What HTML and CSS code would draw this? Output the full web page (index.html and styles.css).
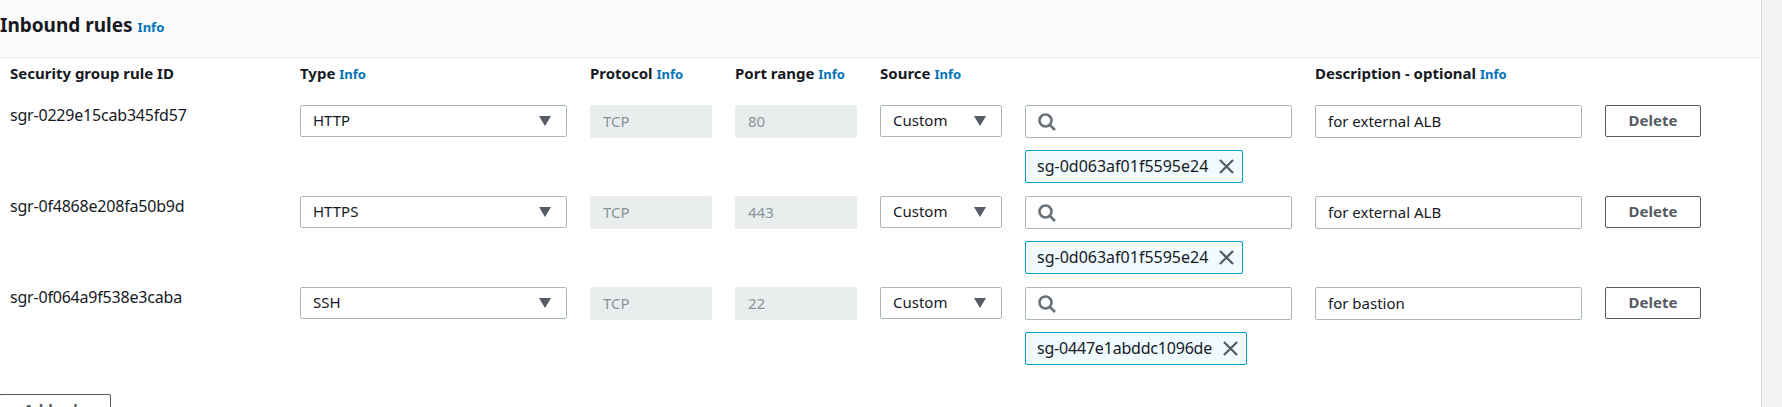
FILE: index.html
```html
<!DOCTYPE html>
<html lang="en">
<head>
<meta charset="utf-8">
<title>Inbound rules</title>
<link rel="stylesheet" href="styles.css">
</head>
<body>
<svg class="sprite" width="0" height="0" aria-hidden="true">
  <symbol id="i-search" viewBox="0 0 18 18"><circle cx="7.5" cy="7.5" r="6" fill="none" stroke="currentColor" stroke-width="2.6"/><path d="M11.8 11.8 17 17" fill="none" stroke="currentColor" stroke-width="2.6"/></symbol>
  <symbol id="i-x" viewBox="0 0 16 16"><path d="M1 1 15 15M15 1 1 15" fill="none" stroke="currentColor" stroke-width="2.4"/></symbol>
</svg>
<main class="panel">
  <header class="panel-head"><h2 class="title">Inbound rules <a class="info">Info</a></h2></header>
  <div class="rules">
    <div class="row labels">
      <div class="label">Security group rule ID</div>
      <div class="label">Type <a class="info">Info</a></div>
      <div class="label">Protocol <a class="info">Info</a></div>
      <div class="label">Port range <a class="info">Info</a></div>
      <div class="label">Source <a class="info">Info</a></div>
      <div></div>
      <div class="label">Description - optional <a class="info">Info</a></div>
    </div>

    <div class="row rule">
      <div class="rule-id">sgr-0229e15cab345fd57</div>
      <div class="field select"><span>HTTP</span><i class="caret"></i></div>
      <div class="field disabled">TCP</div>
      <div class="field disabled">80</div>
      <div class="field select"><span>Custom</span><i class="caret"></i></div>
      <div class="source">
        <div class="field search"><svg class="search-icon"><use href="#i-search"/></svg></div>
        <div class="chip">sg-0d063af01f5595e24<svg class="chip-x"><use href="#i-x"/></svg></div>
      </div>
      <div class="field">for external ALB</div>
      <div class="btn delete">Delete</div>
    </div>

    <div class="row rule">
      <div class="rule-id">sgr-0f4868e208fa50b9d</div>
      <div class="field select"><span>HTTPS</span><i class="caret"></i></div>
      <div class="field disabled">TCP</div>
      <div class="field disabled">443</div>
      <div class="field select"><span>Custom</span><i class="caret"></i></div>
      <div class="source">
        <div class="field search"><svg class="search-icon"><use href="#i-search"/></svg></div>
        <div class="chip">sg-0d063af01f5595e24<svg class="chip-x"><use href="#i-x"/></svg></div>
      </div>
      <div class="field">for external ALB</div>
      <div class="btn delete">Delete</div>
    </div>

    <div class="row rule">
      <div class="rule-id">sgr-0f064a9f538e3caba</div>
      <div class="field select"><span>SSH</span><i class="caret"></i></div>
      <div class="field disabled">TCP</div>
      <div class="field disabled">22</div>
      <div class="field select"><span>Custom</span><i class="caret"></i></div>
      <div class="source">
        <div class="field search"><svg class="search-icon"><use href="#i-search"/></svg></div>
        <div class="chip chip-tight">sg-0447e1abddc1096de<svg class="chip-x"><use href="#i-x"/></svg></div>
      </div>
      <div class="field">for bastion</div>
      <div class="btn delete">Delete</div>
    </div>
  </div>
  <div class="btn add">Add rule</div>
</main>
</body>
</html>
```
FILE: styles.css
```css
* { box-sizing: border-box; }
html, body { margin: 0; height: 407px; overflow: hidden; }
body { background: #f2f3f3; font-family: "Noto Sans", sans-serif; font-size: 15px; line-height: 20px; color: #16191f; }
.sprite { position: absolute; }
.panel { width: 1762px; height: 407px; background: #fff; border-right: 1px solid #d5dbdb; overflow: hidden; }
.panel-head { height: 58px; padding-top: 13px; background: #fafafa; border-bottom: 1px solid #eaeded; }
.title { margin: 0; font-size: 19px; line-height: 24px; font-weight: 700; }
.info { font-size: 13px; font-weight: 700; color: #0073bb; }
.rules { padding-left: 10px; }
.row { display: grid; grid-template-columns: 267px 267px 122px 122px 122px 267px 267px 96px; column-gap: 23px; align-items: start; }
.labels { height: 47px; padding-top: 5px; }
.label { font-weight: 700; }
.rule { height: 91px; }
.rule-id { font-size: 16px; letter-spacing: -0.2px; }
.field { height: 33px; padding: 0 12px 2px; border: 1px solid #aab7b8; border-radius: 2px; background: #fff; display: flex; align-items: center; }
.select { justify-content: space-between; height: 32px; padding-bottom: 0; }
.select > span { padding-bottom: 3px; }
.caret { width: 0; height: 0; border-left: 6px solid transparent; border-right: 6px solid transparent; border-top: 10px solid #545b64; margin-right: 3px; }
.disabled { background: #eaeded; border-color: #eaeded; color: #879596; }
.source { display: flex; flex-direction: column; align-items: flex-start; gap: 12px; }
.search { width: 100%; padding-bottom: 0; }
.search-icon { width: 18px; height: 18px; color: #687078; }
.chip { height: 33px; padding: 0 8px 2px 11px; display: flex; align-items: center; gap: 11px; font-size: 16px; background: #f1faff; border: 1px solid #00a1c9; border-radius: 2px; }
.chip-tight { letter-spacing: -0.2px; }
.chip-x { width: 15px; height: 15px; color: #545b64; position: relative; top: 1px; }
.btn { display: flex; align-items: center; justify-content: center; height: 32px; padding-bottom: 2px; border: 1px solid #545b64; border-radius: 2px; background: #fff; color: #545b64; font-weight: 700; }
.add { width: 112px; margin: 16px 0 0 -1px; }
```
